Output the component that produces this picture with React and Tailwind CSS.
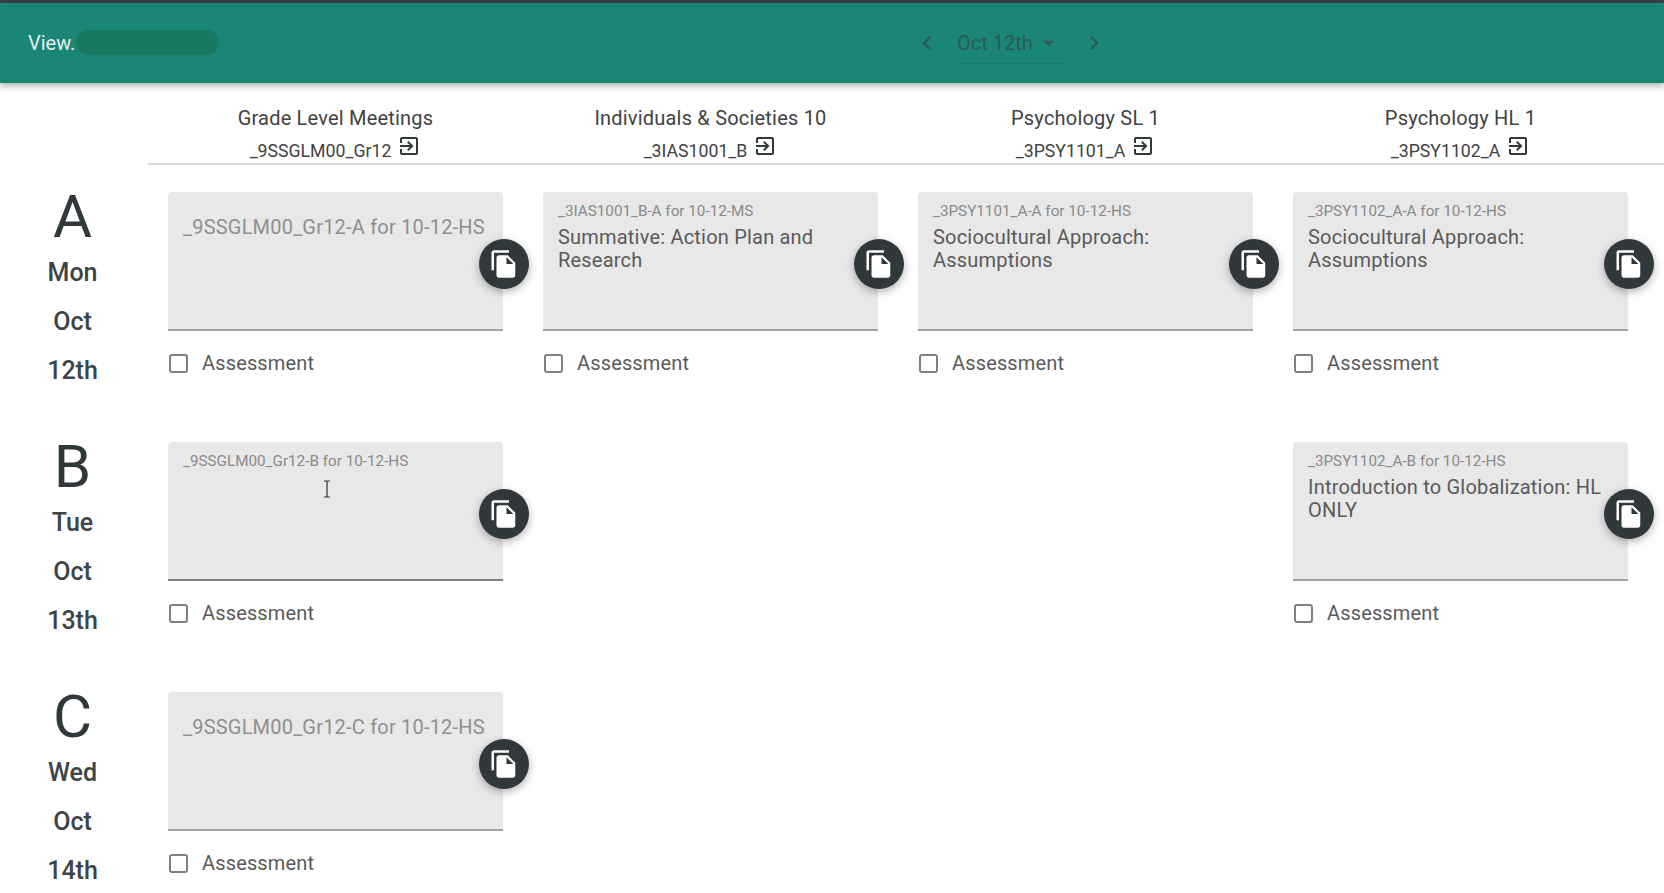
const courses = [
  { title: "Grade Level Meetings", code: "_9SSGLM00_Gr12" },
  { title: "Individuals & Societies 10", code: "_3IAS1001_B" },
  { title: "Psychology SL 1", code: "_3PSY1101_A" },
  { title: "Psychology HL 1", code: "_3PSY1102_A" },
];

const rows = [
  {
    letter: "A", day: "Mon", date: "12th",
    cells: [
      { label: "_9SSGLM00_Gr12-A for 10-12-HS" },
      { label: "_3IAS1001_B-A for 10-12-MS", text: "Summative: Action Plan and Research" },
      { label: "_3PSY1101_A-A for 10-12-HS", text: "Sociocultural Approach: Assumptions" },
      { label: "_3PSY1102_A-A for 10-12-HS", text: "Sociocultural Approach: Assumptions" },
    ],
  },
  {
    letter: "B", day: "Tue", date: "13th",
    cells: [
      { label: "_9SSGLM00_Gr12-B for 10-12-HS", focused: true, floated: true },
      null,
      null,
      { label: "_3PSY1102_A-B for 10-12-HS", text: "Introduction to Globalization: HL ONLY" },
    ],
  },
  {
    letter: "C", day: "Wed", date: "14th",
    cells: [{ label: "_9SSGLM00_Gr12-C for 10-12-HS" }, null, null, null],
  },
];

function ExitIcon() {
  return (
    <svg viewBox="0 0 24 24" className="w-[24px] h-[24px] fill-[#30383b] shrink-0">
      <path d="M10.09 15.59L11.5 17l5-5-5-5-1.41 1.41L12.67 11H3v2h9.67l-2.58 2.59zM19 3H5c-1.11 0-2 .9-2 2v4h2V5h14v14H5v-4H3v4c0 1.1.89 2 2 2h14c1.1 0 2-.9 2-2V5c0-1.1-.9-2-2-2z" />
    </svg>
  );
}

function CopyIcon() {
  return (
    <svg viewBox="0 0 24 24" className="w-[30px] h-[30px] fill-white">
      <path d="M16 1H4c-1.1 0-2 .9-2 2v14h2V3h12V1zm-1 4l6 6v10c0 1.1-.9 2-2 2H7.99C6.89 23 6 22.1 6 21l.01-14c0-1.1.89-2 1.99-2h7zm-1 7h5.5L14 6.5V12z" />
    </svg>
  );
}

function Card({ cell }) {
  return (
    <div className="px-[20px]">
      <div className="relative">
        <div
          className={`h-[139px] bg-[#e8e8e8] rounded-t-[4px] px-[15px] ${
            cell.focused ? "border-b-2 border-[#7a8583]" : "border-b-2 border-[#a3a3a3]"
          }`}
        >
          {cell.text || cell.floated ? (
            <div>
              <div className="pt-[11px] text-[15.25px] leading-[16px] text-[#8a8a8a] whitespace-nowrap">{cell.label}</div>
              {cell.text && (
                <div className="mt-[7px] text-[20px] leading-[23px] tracking-[0.2px] text-[#5a5a5a]">{cell.text}</div>
              )}
            </div>
          ) : (
            <div className="pt-[24px] text-[20px] leading-[23px] tracking-[0.2px] text-[#8f8f8f] whitespace-nowrap">{cell.label}</div>
          )}
        </div>
        <div className="absolute right-[-26px] top-[47px] w-[50px] h-[50px] rounded-full bg-[#30383b] flex items-center justify-center shadow-[0_3px_8px_rgba(0,0,0,0.3)]">
          <CopyIcon />
        </div>
      </div>
      <div className="flex items-center mt-[20px] pl-[1px] h-[24px]">
        <span className="w-[19px] h-[19px] rounded-[3px] border-2 border-[#808080]" />
        <span className="ml-[14px] text-[20px] leading-[24px] tracking-[0.15px] text-[#5a5a5a]">Assessment</span>
      </div>
    </div>
  );
}

export default function App() {
  return (
    <div className="relative h-[893px] overflow-hidden bg-white font-['Roboto',sans-serif]">
      <div className="h-[3px] bg-[#353f42]" />
      <header className="relative h-[80px] bg-[#1a8676] shadow-[0_3px_6px_rgba(0,0,0,0.3)] flex items-center">
        <div className="flex items-center pl-[28px] w-[913px] mt-[-1px]">
          <span className="text-[20px] text-[#e6efed]">View.</span>
          <span className="ml-[1px] w-[143px] h-[25px] rounded-full bg-[#177a60]" />
        </div>
        <div className="flex items-center">
          <svg viewBox="0 0 24 24" className="w-[28px] h-[28px] fill-[#2c5a54]">
            <path d="M15.41 7.41L14 6l-6 6 6 6 1.41-1.41L10.83 12z" />
          </svg>
          <div className="ml-[17px] w-[106px] h-[41px] border-b border-[#177a60] flex items-center">
            <span className="ml-[-1px] text-[20px] text-[#2c5a54]">Oct 12th</span>
            <svg viewBox="0 0 24 24" className="ml-[3px] w-[26px] h-[26px] fill-[#2c5a54]">
              <path d="M7 10l5 5 5-5z" />
            </svg>
          </div>
          <svg viewBox="0 0 24 24" className="ml-[16px] w-[28px] h-[28px] fill-[#2c5a54]">
            <path d="M10 6L8.59 7.41 13.17 12l-4.58 4.59L10 18l6-6z" />
          </svg>
        </div>
      </header>

      <div className="ml-[148px] h-[82px] border-b-2 border-[#dcdcdc] grid grid-cols-[repeat(4,375px)] pt-[23px]">
        {courses.map((c) => (
          <div key={c.code} className="flex flex-col items-center text-[#424242]">
            <div className="text-[20px] leading-[24px] tracking-[0.2px] h-[24px]">{c.title}</div>
            <div className="flex items-start mt-[6px]">
              <span className="text-[17.7px] leading-[24px] mt-[3px]">{c.code}</span>
              <span className="ml-[6px] mt-[-2px]"><ExitIcon /></span>
            </div>
          </div>
        ))}
      </div>

      <main className="pt-[27px]">
        {rows.map((r) => (
          <section key={r.letter} className="flex h-[250px]">
            <div className="w-[148px] pr-[3px] flex flex-col items-center text-[#30383b]">
              <div className="text-[60px] leading-[50px] h-[50px] font-normal">{r.letter}</div>
              <div className="mt-[6px] text-[25px] leading-[49px] font-medium text-[#3c4446]">{r.day}</div>
              <div className="text-[25px] leading-[49px] font-medium text-[#3c4446]">Oct</div>
              <div className="text-[25px] leading-[49px] font-medium text-[#3c4446]">{r.date}</div>
            </div>
            <div className="grid grid-cols-[repeat(4,375px)] items-start">
              {r.cells.map((cell, i) => (cell ? <Card key={i} cell={cell} /> : <div key={i} />))}
            </div>
          </section>
        ))}
      </main>

      <svg viewBox="0 0 10 18" className="absolute left-[322px] top-[480px] w-[10px] h-[18px] fill-none stroke-[#333333] stroke-[1.2]">
        <path d="M2 1h6M2 17h6M5 1v16" />
      </svg>
    </div>
  );
}
